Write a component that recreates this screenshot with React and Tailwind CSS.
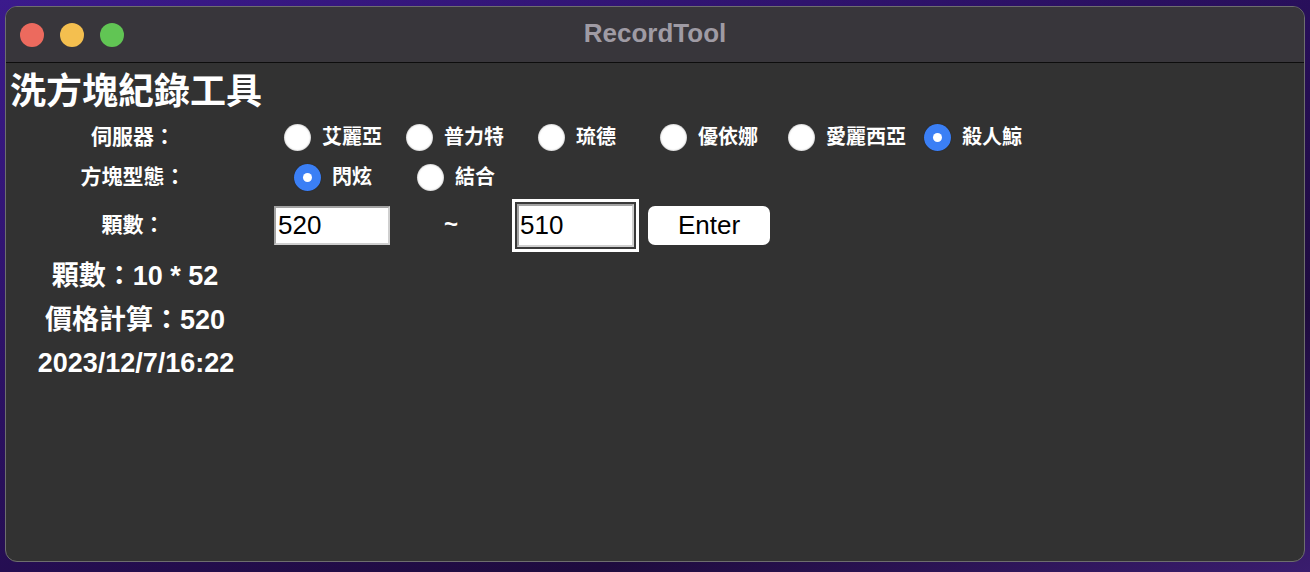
import React from "react";

const FONT = { fontFamily: '"Liberation Sans", "Noto Sans CJK TC", sans-serif' };

function Radio({ checked }) {
  return checked ? (
    <span className="flex h-[27px] w-[27px] shrink-0 items-center justify-center rounded-full bg-[#3b7ff5] shadow-[0_0_1px_rgba(0,0,0,0.6)]">
      <span className="h-[9px] w-[9px] rounded-full bg-white" />
    </span>
  ) : (
    <span className="h-[27px] w-[27px] shrink-0 rounded-full bg-white shadow-[inset_0_0_2px_rgba(0,0,0,0.45)]" />
  );
}

function RadioItem({ label, checked, w }) {
  return (
    <div className={`flex items-center gap-[11px] ${w}`}>
      <Radio checked={checked} />
      <span className="text-[20px] font-bold text-white leading-none">{label}</span>
    </div>
  );
}

export default function App() {
  return (
    <div
      className="h-[572px] w-[1310px] overflow-hidden bg-[linear-gradient(160deg,#3b1a8c_0%,#2a1060_40%,#1e0b3e_75%,#3a1d6e_100%)] pl-[5px] pt-[6px]"
      style={FONT}
    >
      <div className="flex h-[556px] w-[1300px] flex-col overflow-hidden rounded-[12px] border border-[#6e6e6e] bg-[#323232]">
        {/* Title bar */}
        <div className="relative flex h-[56px] shrink-0 items-center border-b border-[#0d0d0d] bg-[#38363b] pl-[14px]">
          <div className="flex gap-[16px]">
            <span className="h-[24px] w-[24px] rounded-full bg-[#ec6a5e]" />
            <span className="h-[24px] w-[24px] rounded-full bg-[#f4bf4f]" />
            <span className="h-[24px] w-[24px] rounded-full bg-[#61c554]" />
          </div>
          <div className="absolute inset-0 flex items-center justify-center pb-[2px]">
            <span className="text-[26px] font-bold text-[#9f9ba4]">RecordTool</span>
          </div>
        </div>

        {/* Content */}
        <div className="flex flex-col pt-[7px]">
          <div className="flex h-[44px] items-center pl-[4px]">
            <h1 className="text-[36px] font-bold leading-none text-white">洗方塊紀錄工具</h1>
          </div>

          {/* Row 1 */}
          <div className="mt-[3px] flex h-[40px] items-center">
            <div className="w-[254px] text-center text-[21px] font-bold text-white">伺服器：</div>
            <div className="ml-[24px] flex items-center">
              <RadioItem label="艾麗亞" w="w-[122px]" />
              <RadioItem label="普力特" w="w-[132px]" />
              <RadioItem label="琉德" w="w-[122px]" />
              <RadioItem label="優依娜" w="w-[128px]" />
              <RadioItem label="愛麗西亞" w="w-[136px]" />
              <RadioItem label="殺人鯨" checked w="w-[120px]" />
            </div>
          </div>

          {/* Row 2 */}
          <div className="flex h-[40px] items-center">
            <div className="w-[254px] text-center text-[21px] font-bold text-white">方塊型態：</div>
            <div className="ml-[34px] flex items-center">
              <RadioItem label="閃炫" checked w="w-[123px]" />
              <RadioItem label="結合" w="w-[120px]" />
            </div>
          </div>

          {/* Row 3 */}
          <div className="mt-[4px] flex h-[48px] items-center">
            <div className="w-[254px] text-center text-[21px] font-bold text-white">顆數：</div>
            <div className="ml-[14px] flex h-[39px] w-[116px] items-center border-2 border-[#a3a3a3] border-b-[#cfcfcf] border-r-[#cfcfcf] bg-white pl-[2px]">
              <span className="text-[26px] leading-none text-black">520</span>
            </div>
            <div className="flex w-[122px] items-center justify-center pb-[2px]">
              <span className="text-[24px] font-bold text-white">~</span>
            </div>
            <div className="flex h-[53px] w-[127px] items-center justify-center bg-white p-[3px]">
              <div className="flex h-full w-full items-center border-2 border-[#3a3a3a] bg-[#3a3a3a]">
                <div className="flex h-full w-full items-center border-2 border-[#a3a3a3] border-b-[#d0d0d0] border-r-[#d0d0d0] bg-white pl-[1px]">
                  <span className="text-[26px] leading-none text-black">510</span>
                </div>
              </div>
            </div>
            <button className="ml-[9px] flex h-[39px] w-[122px] items-center justify-center rounded-[7px] bg-white">
              <span className="text-[26px] leading-none text-black">Enter</span>
            </button>
          </div>

          {/* Results */}
          <div className="mt-[7px] flex h-[40px] w-[258px] items-center justify-center">
            <span className="text-[27px] font-bold text-white">顆數：10 * 52</span>
          </div>
          <div className="mt-[4px] flex h-[40px] w-[258px] items-center justify-center">
            <span className="text-[27px] font-bold text-white">價格計算：520</span>
          </div>
          <div className="mt-[3px] flex h-[40px] w-[260px] items-center justify-center">
            <span className="text-[27px] font-bold text-white">2023/12/7/16:22</span>
          </div>
        </div>
      </div>
    </div>
  );
}
